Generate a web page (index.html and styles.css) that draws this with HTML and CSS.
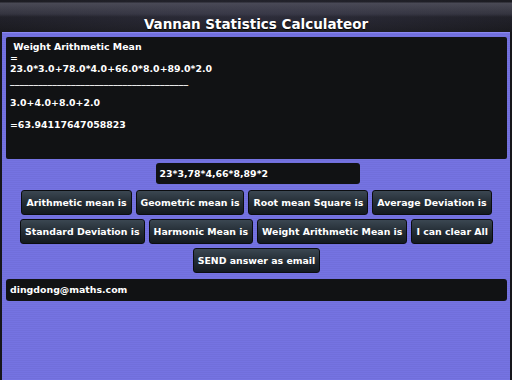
FILE: index.html
```html
<!DOCTYPE html>
<html lang="en">
<head>
    <meta charset="UTF-8">
    <meta name="viewport" content="width=device-width, initial-scale=1.0">
    <title>Vannan Statistics Calculateor</title>
    <link rel="stylesheet" href="styles.css">
</head>
<body>
    <div class="app">
        <!-- title bar -->
        <div class="titlebar">Vannan Statistics Calculateor</div>

        <div class="main">
            <!-- result panel -->
            <div class="output"> Weight Arithmetic Mean
=
23.0*3.0+78.0*4.0+66.0*8.0+89.0*2.0
______________________________________

3.0+4.0+8.0+2.0

=63.94117647058823</div>

            <div class="entry-row">
                <div class="field values">23*3,78*4,66*8,89*2</div>
            </div>

            <!-- buttons -->
            <div class="btn-row">
                <button class="btn">Arithmetic mean is</button>
                <button class="btn">Geometric mean is</button>
                <button class="btn">Root mean Square is</button>
                <button class="btn">Average Deviation is</button>
            </div>
            <div class="btn-row">
                <button class="btn">Standard Deviation is</button>
                <button class="btn">Harmonic Mean is</button>
                <button class="btn">Weight Arithmetic Mean is</button>
                <button class="btn">I can clear All</button>
            </div>
            <div class="btn-row">
                <button class="btn">SEND answer as email</button>
            </div>

            <div class="field email">dingdong@maths.com</div>
        </div>
    </div>
</body>
</html>
```

FILE: styles.css
```css
body {
    margin: 0;
    background-color: #16161b;
    font-family: "DejaVu Sans", Verdana, sans-serif;
    font-weight: bold;
    color: white;
}

.app {
    width: 512px;
    height: 380px;
    display: flex;
    flex-direction: column;
}

/* title bar */
.titlebar {
    height: 32px;
    box-sizing: border-box;
    padding-top: 16px;
    text-align: center;
    font-size: 13.5px;
    line-height: 17px;
    background:
        radial-gradient(ellipse 60% 90% at 50% 55%, rgba(70, 70, 95, 0.35), transparent),
        linear-gradient(#1c1c22 0, #1c1c22 2px, #4a4a55 3px, #33333d 14px, #1f1f26 17px, #19191e 100%);
    text-shadow: 0 1px 1px #000;
}

/* purple body */
.main {
    flex: 1;
    margin: 0 2px;
    padding: 4px 3px 0 4px;
    display: flex;
    flex-direction: column;
    gap: 4px;
    background-color: #7472e0;
    background-image: repeating-linear-gradient(#7573e2 0, #7573e2 1px, #716fdb 1px, #716fdb 2px);
    border-top: 1px solid #8a88f0;
}

.output {
    height: 122px;
    box-sizing: border-box;
    padding: 4px 4px 3px;
    background-color: #111214;
    border-radius: 2px;
    font-size: 9.4px;
    line-height: 11.2px;
    white-space: pre;
    overflow: hidden;
}

.entry-row {
    display: flex;
    justify-content: center;
    margin-bottom: 2px;
}

.field {
    background-color: #111214;
    border-radius: 3px;
    font-size: 9.4px;
    box-sizing: border-box;
}

.values {
    width: 204px;
    height: 21px;
    line-height: 21px;
    padding-left: 4px;
    margin-left: 2px;
}

.email {
    height: 22px;
    line-height: 22px;
    padding-left: 4px;
    margin-top: 2px;
}

.btn-row {
    display: flex;
    justify-content: center;
    gap: 4px;
}

.btn {
    height: 25px;
    padding: 0 4px;
    font-family: inherit;
    font-weight: bold;
    font-size: 9.4px;
    color: white;
    background: linear-gradient(#3b4752, #242d35 50%, #141a1f);
    border: 1px solid #0b0d10;
    border-radius: 3px;
    cursor: pointer;
}
```
